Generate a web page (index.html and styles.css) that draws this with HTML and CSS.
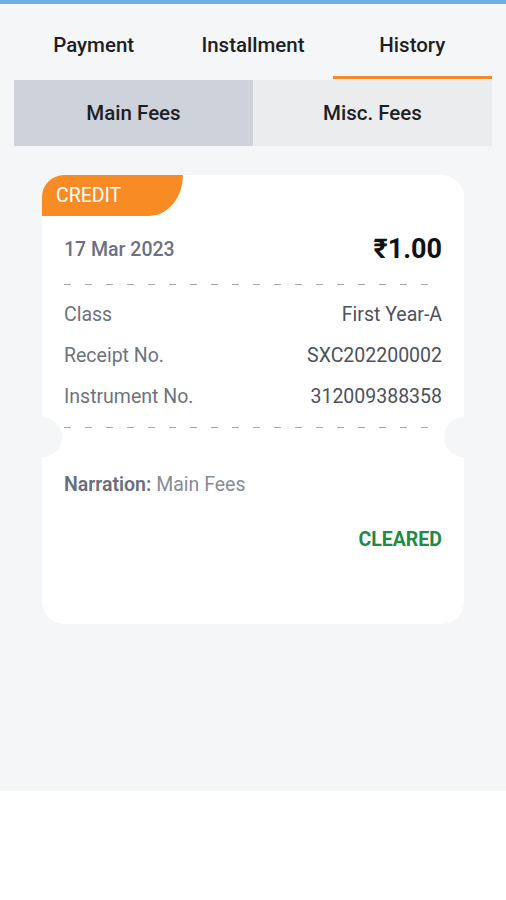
FILE: index.html
```html
<!DOCTYPE html>
<html lang="en">
<head>
<meta charset="utf-8">
<title>Fee History</title>
<link rel="stylesheet" href="styles.css">
</head>
<body>
<div class="app">
  <nav class="tabs">
    <div class="tab">Payment</div>
    <div class="tab">Installment</div>
    <div class="tab active">History</div>
  </nav>
  <div class="subtabs">
    <div class="subtab active">Main Fees</div>
    <div class="subtab">Misc. Fees</div>
  </div>
  <div class="card">
    <div class="badge">CREDIT</div>
    <div class="card-top">
      <div class="date">17 Mar 2023</div>
      <div class="amount">₹1.00</div>
    </div>
    <div class="dash"></div>
    <div class="rows">
      <div class="row"><span class="label">Class</span><span class="value">First Year-A</span></div>
      <div class="row"><span class="label">Receipt No.</span><span class="value">SXC202200002</span></div>
      <div class="row"><span class="label">Instrument No.</span><span class="value">312009388358</span></div>
    </div>
    <div class="split">
      <div class="dash"></div>
      <span class="notch notch-left"></span>
      <span class="notch notch-right"></span>
    </div>
    <div class="narration"><b>Narration:</b> Main Fees</div>
    <div class="status">CLEARED</div>
  </div>
</div>
</body>
</html>
```

FILE: styles.css
```css
* { box-sizing: border-box; }
html, body { margin: 0; padding: 0; background: #ffffff; }
body { font-family: Roboto, "Noto Sans", "Liberation Sans", sans-serif; }

.app {
  background: #f5f6f8;
  border-top: 4px solid #6eb0e2;
  min-height: 791px;
  overflow: hidden;
}

.tabs {
  display: grid;
  grid-template-columns: 1fr 1fr 1fr;
  margin: 0 14px;
  height: 75px;
}
.tab {
  display: flex;
  align-items: center;
  justify-content: center;
  padding-top: 10px;
  border-bottom: 3px solid transparent;
  font-size: 20.5px;
  font-weight: 500;
  color: #1d1f24;
}
.tab.active { border-bottom-color: #f7892a; }

.subtabs {
  display: grid;
  grid-template-columns: 1fr 1fr;
  margin: 1px 14px 0;
  height: 66px;
}
.subtab {
  display: flex;
  align-items: center;
  justify-content: center;
  background: #ebeced;
  font-size: 20.5px;
  font-weight: 500;
  color: #1d1f24;
}
.subtab.active { background: #ced2da; }

.card {
  position: relative;
  margin: 29px 42px 0;
  height: 449px;
  background: #ffffff;
  border-radius: 22px;
}

.badge {
  width: 141px;
  height: 41px;
  background: #f98b25;
  color: #ffffff;
  font-size: 19.5px;
  line-height: 41px;
  padding-left: 14px;
  border-radius: 22px 0 34px 0 / 22px 0 41px 0;
}

.card-top {
  display: flex;
  justify-content: space-between;
  align-items: center;
  margin: 18px 22px 0;
  height: 30px;
}
.date { font-size: 19.5px; font-weight: 500; color: #6b7180; }
.amount { font-size: 27px; font-weight: 700; color: #111216; }

.dash {
  height: 1px;
  margin: 0 22px;
  background: repeating-linear-gradient(90deg, #a3a7ae 0 7px, transparent 7px 21px);
}
.card-top + .dash { margin-top: 20px; }

.rows { margin: 9px 22px 0; }
.row {
  display: flex;
  justify-content: space-between;
  align-items: center;
  height: 41px;
  font-size: 19.5px;
}
.label { color: #6e737c; }
.value { color: #4d525b; }

.split { position: relative; padding-top: 10px; }
.notch {
  position: absolute;
  top: 0;
  width: 40px;
  height: 40px;
  border-radius: 50%;
  background: #f5f6f8;
}
.notch-left { left: -20px; }
.notch-right { right: -20px; }

.narration {
  margin: 45px 22px 0;
  font-size: 19.5px;
  color: #878c95;
}
.narration b { font-weight: 600; color: #686e7b; }

.status {
  margin: 32px 22px 0;
  text-align: right;
  font-size: 19.5px;
  font-weight: 700;
  color: #1f8b45;
}
```
